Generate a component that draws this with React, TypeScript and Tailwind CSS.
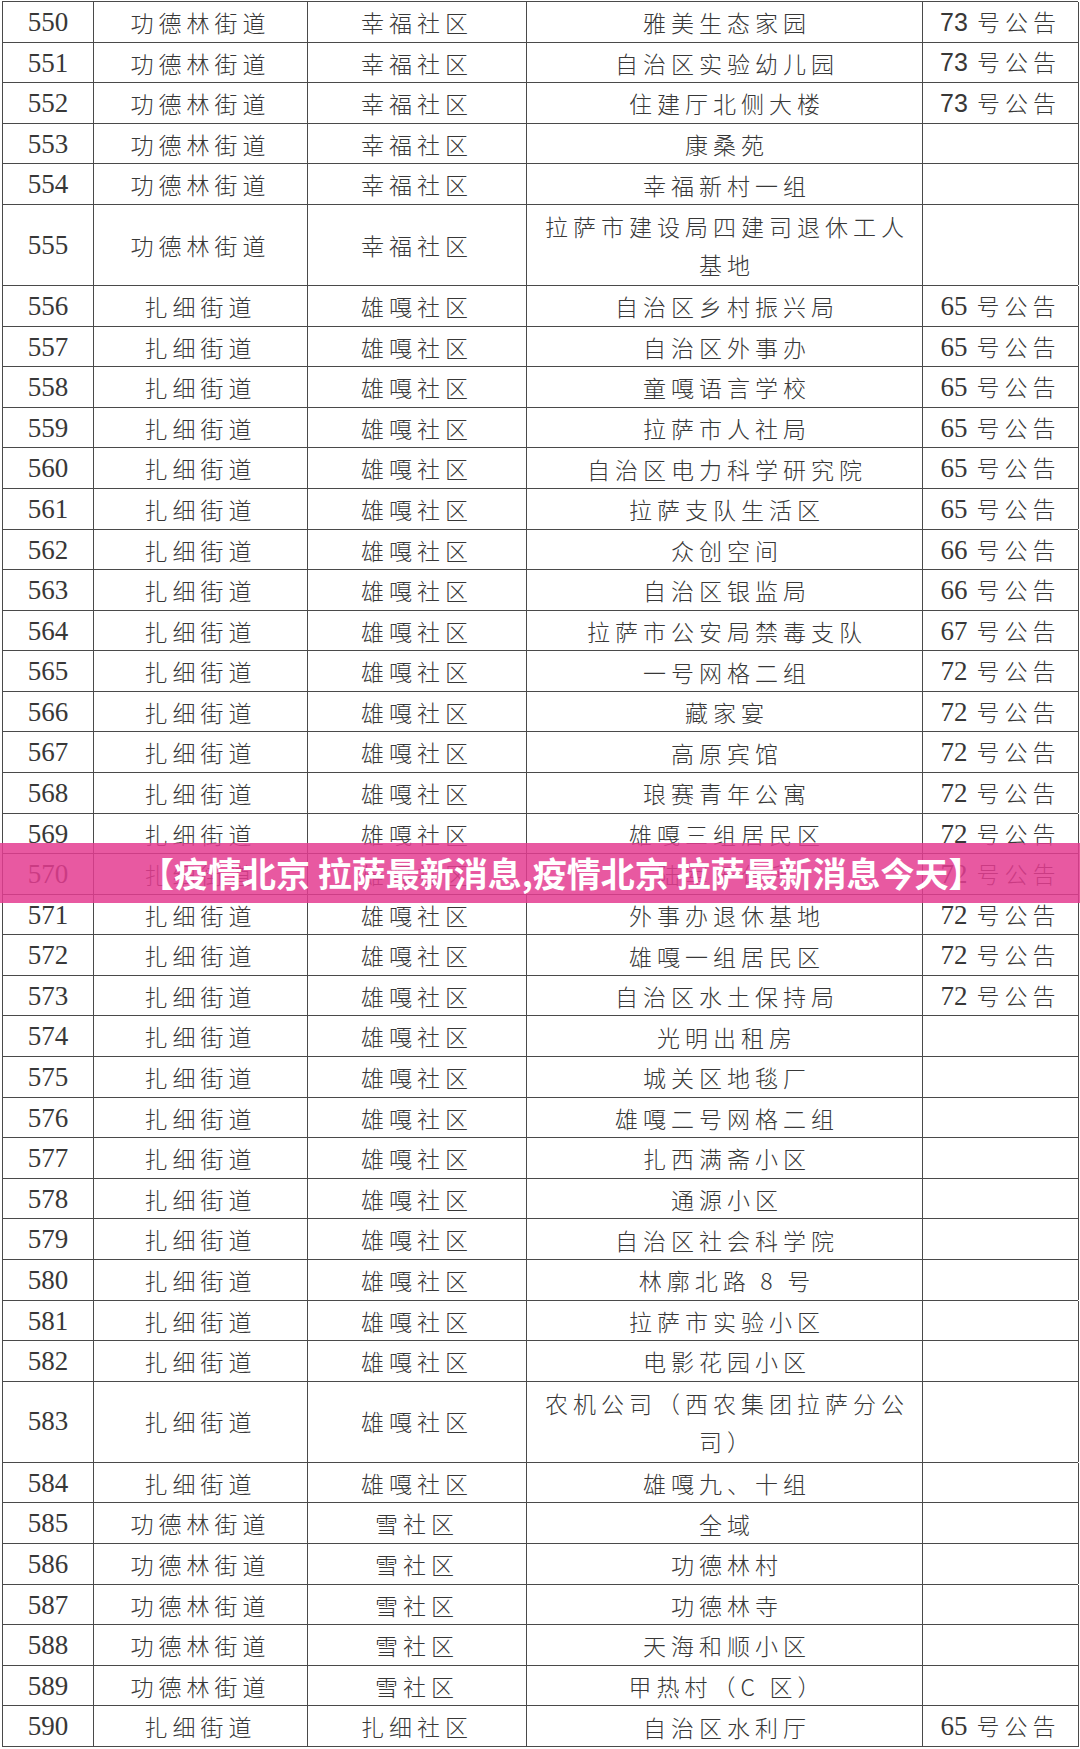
type Row = {
  no: string;
  street: string;
  community: string;
  place: string;
  notice?: string;
  tall?: boolean;
};

const zx = "扎细街道";
const xg = "雄嘎社区";
const gdl = "功德林街道";

const rows: Row[] = [
  { no: "550", street: gdl, community: "幸福社区", place: "雅美生态家园", notice: "73" },
  { no: "551", street: gdl, community: "幸福社区", place: "自治区实验幼儿园", notice: "73" },
  { no: "552", street: gdl, community: "幸福社区", place: "住建厅北侧大楼", notice: "73" },
  { no: "553", street: gdl, community: "幸福社区", place: "康桑苑" },
  { no: "554", street: gdl, community: "幸福社区", place: "幸福新村一组" },
  { no: "555", street: gdl, community: "幸福社区", place: "拉萨市建设局四建司退休工人基地", tall: true },
  { no: "556", street: zx, community: xg, place: "自治区乡村振兴局", notice: "65" },
  { no: "557", street: zx, community: xg, place: "自治区外事办", notice: "65" },
  { no: "558", street: zx, community: xg, place: "童嘎语言学校", notice: "65" },
  { no: "559", street: zx, community: xg, place: "拉萨市人社局", notice: "65" },
  { no: "560", street: zx, community: xg, place: "自治区电力科学研究院", notice: "65" },
  { no: "561", street: zx, community: xg, place: "拉萨支队生活区", notice: "65" },
  { no: "562", street: zx, community: xg, place: "众创空间", notice: "66" },
  { no: "563", street: zx, community: xg, place: "自治区银监局", notice: "66" },
  { no: "564", street: zx, community: xg, place: "拉萨市公安局禁毒支队", notice: "67" },
  { no: "565", street: zx, community: xg, place: "一号网格二组", notice: "72" },
  { no: "566", street: zx, community: xg, place: "藏家宴", notice: "72" },
  { no: "567", street: zx, community: xg, place: "高原宾馆", notice: "72" },
  { no: "568", street: zx, community: xg, place: "琅赛青年公寓", notice: "72" },
  { no: "569", street: zx, community: xg, place: "雄嘎三组居民区", notice: "72" },
  { no: "570", street: zx, community: xg, place: "陆军干休所", notice: "72" },
  { no: "571", street: zx, community: xg, place: "外事办退休基地", notice: "72" },
  { no: "572", street: zx, community: xg, place: "雄嘎一组居民区", notice: "72" },
  { no: "573", street: zx, community: xg, place: "自治区水土保持局", notice: "72" },
  { no: "574", street: zx, community: xg, place: "光明出租房" },
  { no: "575", street: zx, community: xg, place: "城关区地毯厂" },
  { no: "576", street: zx, community: xg, place: "雄嘎二号网格二组" },
  { no: "577", street: zx, community: xg, place: "扎西满斋小区" },
  { no: "578", street: zx, community: xg, place: "通源小区" },
  { no: "579", street: zx, community: xg, place: "自治区社会科学院" },
  { no: "580", street: zx, community: xg, place: "林廓北路\u20098\u2009号" },
  { no: "581", street: zx, community: xg, place: "拉萨市实验小区" },
  { no: "582", street: zx, community: xg, place: "电影花园小区" },
  { no: "583", street: zx, community: xg, place: "农机公司（西农集团拉萨分公司）", tall: true },
  { no: "584", street: zx, community: xg, place: "雄嘎九、十组" },
  { no: "585", street: gdl, community: "雪社区", place: "全域" },
  { no: "586", street: gdl, community: "雪社区", place: "功德林村" },
  { no: "587", street: gdl, community: "雪社区", place: "功德林寺" },
  { no: "588", street: gdl, community: "雪社区", place: "天海和顺小区" },
  { no: "589", street: gdl, community: "雪社区", place: "甲热村（C\u2009区）" },
  { no: "590", street: zx, community: "扎细社区", place: "自治区水利厅", notice: "65" },
];

const cjk = "font-['Noto_Sans_CJK_SC',sans-serif] font-light text-[23px] tracking-[5px]";

function TableRow({ row }: { row: Row }) {
  return (
    <div
      className={`grid grid-cols-[91px_214px_219px_396px_156px] border-b border-[#4a4a4a] text-[#383838] ${
        row.tall ? "h-[81.16px]" : "h-[40.58px]"
      }`}
    >
      <div className="flex items-center justify-center border-r border-[#4a4a4a] font-['Liberation_Serif',serif] text-[27px]">
        {row.no}
      </div>
      <div className={`flex items-center justify-center border-r border-[#4a4a4a] ${cjk}`}>{row.street}</div>
      <div className={`flex items-center justify-center border-r border-[#4a4a4a] ${cjk}`}>{row.community}</div>
      <div className={`flex items-center justify-center border-r border-[#4a4a4a] px-[8px] text-center leading-[38px] ${cjk}`}>
        <span className="pl-[5px]">{row.place}</span>
      </div>
      <div className="flex items-center justify-center border-r border-[#4a4a4a]">
        {row.notice && (
          <span className="flex items-baseline">
            <span
              className={
                row.notice === "73"
                  ? "font-['Liberation_Sans',sans-serif] text-[25px]"
                  : "font-['Liberation_Serif',serif] text-[27px]"
              }
            >
              {row.notice}
            </span>
            <span className={`ml-[9px] ${cjk}`}>号公告</span>
          </span>
        )}
      </div>
    </div>
  );
}

export default function App() {
  return (
    <div className="relative min-h-[1749px] w-[1080px] bg-white px-[2px] pt-[1px]">
      <div className="border-l border-t border-[#4a4a4a]">
        {rows.map((r) => (
          <TableRow key={r.no} row={r} />
        ))}
      </div>

      <div className="absolute left-0 right-0 top-[843px] flex h-[60px] items-center bg-[#e43c91]/85 pl-[140px]">
        <span className="font-['Noto_Sans_CJK_SC',sans-serif] text-[34px] font-bold leading-none text-white">
          【疫情北京 拉萨最新消息,疫情北京 拉萨最新消息今天】
        </span>
      </div>
    </div>
  );
}
